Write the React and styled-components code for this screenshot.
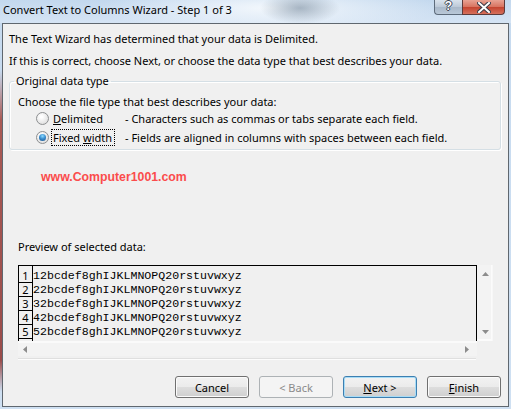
import styled, { createGlobalStyle } from 'styled-components'

const GlobalStyle = createGlobalStyle`
  html, body {
    margin: 0;
    padding: 0;
  }
  body {
    width: 511px;
    height: 409px;
    overflow: hidden;
    font-family: "Noto Sans", "Liberation Sans", sans-serif;
    font-size: 11px;
    color: #000;
  }
`

const sample = 'bcdef8ghIJKLMNOPQ20rstuvwxyz'
const rows = [1, 2, 3, 4, 5]

const ArrowUp = () => (
  <svg width="7" height="4" viewBox="0 0 7 4"><path d="M0 4 L3.5 0 L7 4 Z" fill="#8c8c8c" /></svg>
)
const ArrowDown = () => (
  <svg width="7" height="4" viewBox="0 0 7 4"><path d="M0 0 L3.5 4 L7 0 Z" fill="#8c8c8c" /></svg>
)
const ArrowLeft = () => (
  <svg width="4" height="7" viewBox="0 0 4 7"><path d="M4 0 L0 3.5 L4 7 Z" fill="#8c8c8c" /></svg>
)
const ArrowRight = () => (
  <svg width="4" height="7" viewBox="0 0 4 7"><path d="M0 0 L4 3.5 L0 7 Z" fill="#8c8c8c" /></svg>
)

const App = () => {
  return (
    <>
      <GlobalStyle />
      <Window>
        <TitleBar>
          <Caption>Convert Text to Columns Wizard - Step 1 of 3</Caption>
          <CaptionButtons>
            <HelpButton>?</HelpButton>
            <CloseButton>
              <svg width="14" height="11" viewBox="0 0 14 11">
                <path d="M2 1 L12 10 M12 1 L2 10" stroke="#3b3b48" strokeWidth="4" strokeLinecap="square" />
                <path d="M2 1 L12 10 M12 1 L2 10" stroke="#fff" strokeWidth="2" strokeLinecap="square" />
              </svg>
            </CloseButton>
          </CaptionButtons>
        </TitleBar>

        <Client>
          <Intro>
            <Line>The Text Wizard has determined that your data is Delimited.</Line>
            <Line $gap>If this is correct, choose Next, or choose the data type that best describes your data.</Line>
          </Intro>

          <Group>
            <Legend>Original data type</Legend>
            <Choose>Choose the file type that best describes your data:</Choose>
            <OptionRow>
              <Radio />
              <OptionLabel>
                <LabelText><Key>D</Key>elimited</LabelText>
              </OptionLabel>
              <Description>- Characters such as commas or tabs separate each field.</Description>
            </OptionRow>
            <OptionRow>
              <Radio $checked />
              <OptionLabel>
                <LabelText $focused>Fixed <Key>w</Key>idth</LabelText>
              </OptionLabel>
              <Description>- Fields are aligned in columns with spaces between each field.</Description>
            </OptionRow>
          </Group>

          <Watermark>www.Computer1001.com</Watermark>

          <PreviewCaption>Preview of selected data:</PreviewCaption>

          <Preview>
            <DataPane>
              <NumberColumn>
                {rows.map(n => <NumberCell key={n}>{n}</NumberCell>)}
              </NumberColumn>
              <DataColumn>
                {rows.map(n => <DataLine key={n}>{n}2{sample}</DataLine>)}
              </DataColumn>
            </DataPane>
            <VScroll>
              <ArrowUp />
              <ArrowDown />
            </VScroll>
            <HScroll>
              <ArrowLeft />
              <ArrowRight />
            </HScroll>
            <Corner />
          </Preview>

          <Separator />

          <ButtonRow>
            <Button>Cancel</Button>
            <Button disabled>&lt; Back</Button>
            <Button $default><Key>N</Key>ext &gt;</Button>
            <Button><Key>F</Key>inish</Button>
          </ButtonRow>
        </Client>
      </Window>
    </>
  )
}

export default App

const Window = styled.div`
  width: 511px;
  height: 409px;
  box-sizing: border-box;
  padding: 0 2px 2px 2px;
  display: flex;
  flex-direction: column;
  background:
    linear-gradient(to bottom, transparent 70px, #a95a55 120px, #9a4c4a 360px, transparent 392px) left top / 2px 100% no-repeat,
    linear-gradient(#c6daef, #cfe0f2);
`

const TitleBar = styled.div`
  height: 23px;
  margin: 0 -2px;
  padding: 0 0 0 3px;
  display: flex;
  justify-content: space-between;
  align-items: flex-start;
  background:
    radial-gradient(ellipse 40px 16px at 300px 8px, rgba(110, 130, 150, 0.55), transparent),
    radial-gradient(ellipse 170px 26px at 270px 8px, rgba(245, 249, 253, 0.95), transparent),
    linear-gradient(#c3d8ee, #d5e4f4);
`

const Caption = styled.div`
  line-height: 20px;
  font-size: 11px;
  color: #000;
`

const CaptionButtons = styled.div`
  display: flex;
  margin-right: 6px;
`

const HelpButton = styled.div`
  width: 28px;
  height: 15px;
  box-sizing: border-box;
  border: 1px solid #5d6b7b;
  border-top: none;
  border-right: none;
  border-radius: 0 0 0 4px;
  background: linear-gradient(#d9e2ec 0%, #bcc9d7 50%, #a9b8c9 51%, #b9c8d8 100%);
  color: #fff;
  font-family: "Liberation Sans", sans-serif;
  font-weight: bold;
  font-size: 12px;
  line-height: 13px;
  text-align: center;
  text-shadow: 1px 0 0 #3c4654, -1px 0 0 #3c4654, 0 1px 0 #3c4654, 0 -1px 0 #3c4654;
`

const CloseButton = styled.div`
  width: 43px;
  height: 15px;
  box-sizing: border-box;
  border: 1px solid #5d3a3a;
  border-top: none;
  border-radius: 0 0 4px 0;
  display: flex;
  align-items: center;
  justify-content: center;
  background: linear-gradient(#e8a293 0%, #d7725f 50%, #c4432f 51%, #d5705c 100%);
`

const Client = styled.div`
  flex: 1;
  display: flex;
  flex-direction: column;
  border: 1px solid #5f676f;
  background: #f0f0f0;
`

const Intro = styled.div`
  padding: 7px 0 0 6px;
`

const Line = styled.div`
  line-height: 16px;
  margin-top: ${p => (p.$gap ? '6px' : '0')};
`

const Group = styled.fieldset`
  margin: 4px 7px 0 6px;
  padding: 0 0 2px 8px;
  min-width: 0;
  border: 1px solid #d5dfe5;
  border-radius: 3px;
  box-shadow: inset 1px 1px 0 #fff, 1px 1px 0 #fff;
`

const Legend = styled.legend`
  margin-left: -4px;
  padding: 0 2px;
  line-height: 16px;
`

const Choose = styled.div`
  margin-top: 5px;
  line-height: 15px;
`

const OptionRow = styled.div`
  height: 19px;
  display: flex;
  align-items: center;
  padding-left: 18px;
`

const Radio = styled.span`
  width: 13px;
  height: 13px;
  box-sizing: border-box;
  border-radius: 50%;
  border: 1px solid #8d8f91;
  background: radial-gradient(circle at 40% 35%, #ffffff 10%, #dcdcdc 85%);
  display: flex;
  align-items: center;
  justify-content: center;
  flex-shrink: 0;
  &::after {
    content: '';
    display: ${p => (p.$checked ? 'block' : 'none')};
    width: 7px;
    height: 7px;
    border-radius: 50%;
    background: radial-gradient(circle at 50% 30%, #8fdcff 0%, #3a8fd0 45%, #1b4f86 100%);
  }
`

const OptionLabel = styled.div`
  width: 74px;
  margin-left: 2px;
  flex-shrink: 0;
`

const LabelText = styled.span`
  display: inline-block;
  padding: 1px 3px 1px 2px;
  line-height: 15px;
  outline: ${p => (p.$focused ? '1px dotted #000' : 'none')};
  outline-offset: -1px;
`

const Key = styled.span`
  text-decoration: underline;
`

const Description = styled.div`
  white-space: nowrap;
`

const Watermark = styled.div`
  margin: 19px 0 0 38px;
  line-height: 16px;
  font-family: "Liberation Sans", Arial, sans-serif;
  font-weight: bold;
  font-size: 12.3px;
  color: #fb4c4c;
`

const PreviewCaption = styled.div`
  margin: 54px 0 0 15px;
  line-height: 16px;
`

const Preview = styled.div`
  margin: 10px 0 0 15px;
  display: grid;
  grid-template-columns: 459px 16px;
  grid-template-rows: 76px 15px;
  width: 475px;
`

const DataPane = styled.div`
  box-sizing: border-box;
  border: 1px solid #000;
  border-bottom: none;
  display: flex;
  overflow: hidden;
`

const NumberColumn = styled.div`
  width: 14px;
  box-sizing: border-box;
  border-right: 1px solid #000;
  padding-top: 3px;
  flex-shrink: 0;
`

const NumberCell = styled.div`
  height: 14px;
  box-sizing: border-box;
  border-bottom: 1px solid #000;
  line-height: 13px;
  text-align: center;
  font-size: 11px;
`

const DataColumn = styled.div`
  padding: 3px 0 0 0;
  font-family: "Liberation Mono", "Courier New", monospace;
  font-size: 11.6px;
`

const DataLine = styled.div`
  height: 14px;
  line-height: 13px;
  white-space: pre;
`

const VScroll = styled.div`
  display: flex;
  flex-direction: column;
  justify-content: space-between;
  align-items: center;
  padding: 7px 0 7px 2px;
  background: #f3f3f3;
  border-right: 1px solid #f7f7f7;
  box-shadow: inset -1px -2px 0 #fbfbfb;
`

const HScroll = styled.div`
  display: flex;
  justify-content: space-between;
  align-items: center;
  padding: 0 8px 0 5px;
  background: #f3f3f3;
  border-top: 2px solid #fafafa;
`

const Corner = styled.div`
  background: #f0f0f0;
`

const Separator = styled.div`
  margin: 2px 32px 0 15px;
  border-top: 1px solid #dfdfdf;
  border-bottom: 1px solid #fcfcfc;
`

const ButtonRow = styled.div`
  display: flex;
  justify-content: flex-end;
  gap: 10px;
  margin: 16px 7px 0 0;
`

const Button = styled.button`
  width: 74px;
  height: 22px;
  box-sizing: border-box;
  padding: 0;
  font-family: inherit;
  font-size: 11px;
  color: ${p => (p.disabled ? '#8a8a8a' : '#000')};
  border: 1px solid ${p => (p.$default ? '#3c7fb1' : p.disabled ? '#adb2b5' : '#707070')};
  border-radius: 3px;
  background: ${p =>
    p.disabled
      ? '#f4f4f4'
      : 'linear-gradient(#f2f2f2 0%, #ebebeb 50%, #dddddd 51%, #cfcfcf 100%)'};
  box-shadow: inset 0 0 0 1px ${p => (p.$default ? '#a8dcf6' : p.disabled ? '#f4f4f4' : '#fbfbfb')};
`
